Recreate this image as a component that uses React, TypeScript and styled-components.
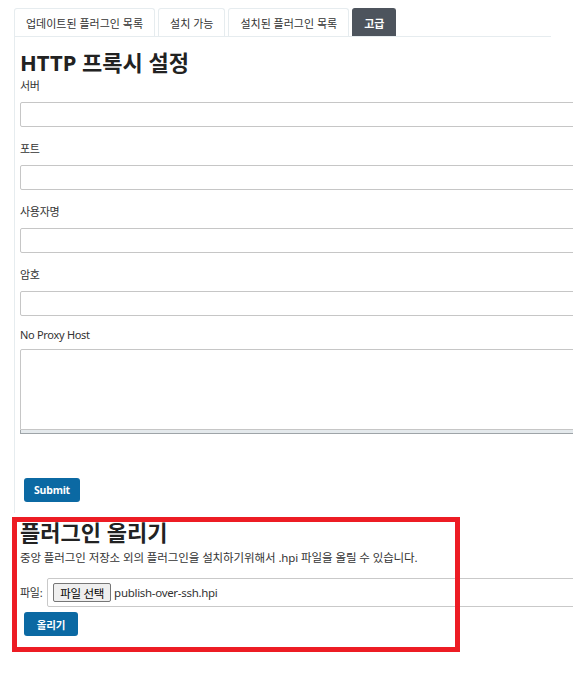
import React from 'react'
import styled, { createGlobalStyle } from 'styled-components'

const GlobalStyle = createGlobalStyle`
  html {
    overflow: hidden;
  }
  html, body {
    margin: 0;
    padding: 0;
    background: #fff;
  }
  body {
    font-family: 'Noto Sans', 'Noto Sans CJK KR', sans-serif;
    color: #333;
  }
`

const Page = styled.div`
  padding: 8px 0 40px 14px;
  width: 700px;
`

const TabBar = styled.div`
  display: flex;
  gap: 3px;
  width: 537px;
  border-bottom: 1px solid #e6ecef;
`

const Tab = styled.div<{ $active?: boolean }>`
  height: 28px;
  box-sizing: border-box;
  padding: 0 11px;
  display: flex;
  align-items: center;
  font-size: 11px;
  letter-spacing: 0;
  font-weight: ${(p) => (p.$active ? 700 : 400)};
  color: ${(p) => (p.$active ? '#fff' : '#333')};
  background: ${(p) => (p.$active ? '#4d545d' : '#fff')};
  border: 1px solid ${(p) => (p.$active ? '#4d545d' : '#e6ecef')};
  border-bottom: none;
  border-radius: 3px 3px 0 0;
`

const Panel = styled.div`
  width: 531px;
  border-left: 1px solid #e6ecef;
  padding: 11px 0 11px 5px;
`

const Heading = styled.h1`
  margin: 0;
  font-size: 22px;
  line-height: 28px;
  font-weight: 700;
  color: #222;
  letter-spacing: 0;
`

const Field = styled.div<{ $gap: number }>`
  margin-top: ${(p) => p.$gap}px;
`

const Label = styled.div`
  font-size: 11px;
  line-height: 16px;
  letter-spacing: -0.3px;
  color: #333;
`

const TextInput = styled.input`
  display: block;
  margin-top: 8px;
  width: 580px;
  height: 25px;
  box-sizing: border-box;
  border: 1px solid #c6c6c6;
  border-radius: 2px;
  background: #fff;
`

const TextArea = styled.textarea`
  display: block;
  margin-top: 6px;
  width: 580px;
  height: 81px;
  box-sizing: border-box;
  border: 1px solid #c6c6c6;
  border-radius: 2px 2px 0 0;
  resize: none;
`

const ResizeBar = styled.div`
  width: 580px;
  height: 4px;
  box-sizing: border-box;
  background: #e4e9ec;
  border-left: 1px solid #9ea4a8;
  border-bottom: 1px solid #9ea4a8;
`

const PrimaryButton = styled.button<{ $top: number }>`
  display: block;
  margin: ${(p) => p.$top}px 0 0 4px;
  height: 24px;
  padding: 0 10px;
  min-width: 54px;
  border: none;
  border-radius: 3px;
  background: #0b69a3;
  color: #fff;
  font-family: 'Noto Sans', 'Noto Sans CJK KR', sans-serif;
  font-size: 10.5px;
  font-weight: 700;
  letter-spacing: -0.2px;
`

const UploadSection = styled.div`
  position: relative;
  padding: 5px 0 0 6px;
`

const RedMark = styled.div`
  position: absolute;
  top: 4px;
  left: -2px;
  width: 448px;
  height: 135px;
  box-sizing: border-box;
  border: 5px solid #ed1c24;
  pointer-events: none;
`

const Description = styled.p`
  margin: 4px 0 0;
  font-size: 11.5px;
  line-height: 16px;
  letter-spacing: -0.1px;
  color: #333;
`

const FileRow = styled.div`
  display: flex;
  align-items: center;
  gap: 5px;
  margin-top: 12px;
`

const FileBox = styled.div`
  display: flex;
  align-items: center;
  gap: 3px;
  width: 540px;
  height: 29px;
  box-sizing: border-box;
  padding-left: 5px;
  border: 1px solid #c9c9c9;
  border-radius: 2px;
`

const ChooseButton = styled.span`
  display: inline-flex;
  align-items: center;
  height: 19px;
  box-sizing: border-box;
  padding: 0 6px;
  background: #efefef;
  border: 1px solid #767676;
  border-radius: 2px;
  font-size: 11.5px;
  letter-spacing: -0.3px;
  color: #000;
`

const FileName = styled.span`
  font-size: 11.5px;
  letter-spacing: -0.3px;
  color: #333;
`

const fields = ['서버', '포트', '사용자명', '암호']

const App = () => {
  return (
    <Page>
      <GlobalStyle />
      <TabBar>
        <Tab>업데이트된 플러그인 목록</Tab>
        <Tab>설치 가능</Tab>
        <Tab>설치된 플러그인 목록</Tab>
        <Tab $active>고급</Tab>
      </TabBar>
      <Panel>
        <Heading>HTTP 프록시 설정</Heading>
        {fields.map((name, i) => (
          <Field key={name} $gap={i === 0 ? 2 : 14}>
            <Label>{name}</Label>
            <TextInput type={name === '암호' ? 'password' : 'text'} />
          </Field>
        ))}
        <Field $gap={11}>
          <Label>No Proxy Host</Label>
          <TextArea />
          <ResizeBar />
        </Field>
        <PrimaryButton $top={44}>Submit</PrimaryButton>
      </Panel>
      <UploadSection>
        <Heading>플러그인 올리기</Heading>
        <Description>
          중앙 플러그인 저장소 외의 플러그인을 설치하기위해서 .hpi 파일을 올릴 수 있습니다.
        </Description>
        <FileRow>
          <Label>파일:</Label>
          <FileBox>
            <ChooseButton>파일 선택</ChooseButton>
            <FileName>publish-over-ssh.hpi</FileName>
          </FileBox>
        </FileRow>
        <PrimaryButton $top={5}>올리기</PrimaryButton>
        <RedMark />
      </UploadSection>
    </Page>
  )
}

export default App
